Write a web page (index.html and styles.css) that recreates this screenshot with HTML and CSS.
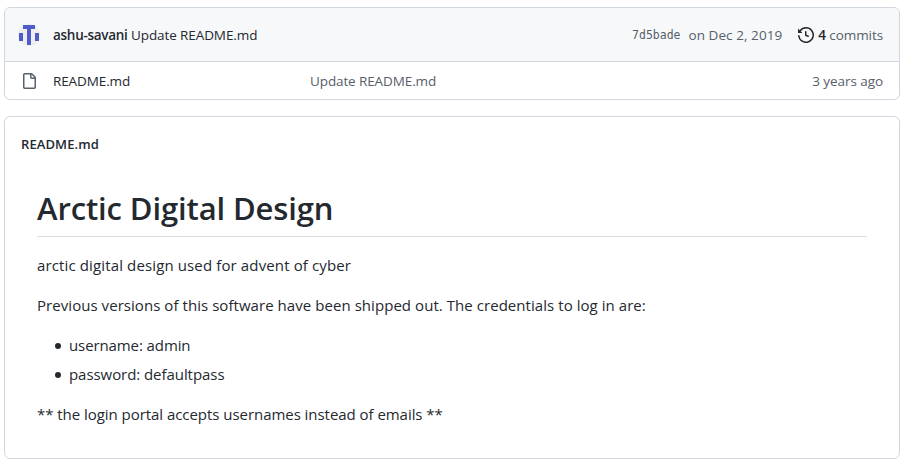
FILE: index.html
```
<!DOCTYPE html>
<html lang="en">
<head>
<meta charset="utf-8">
<title>README.md</title>
<link rel="stylesheet" href="styles.css">
</head>
<body>
<section class="box files">
  <header class="commit-bar">
    <svg class="avatar" width="22" height="22" viewBox="0 0 22 22" aria-hidden="true" shape-rendering="crispEdges">
      <circle cx="11" cy="11" r="11" fill="#eeeeee" shape-rendering="auto"/>
      <path fill="#505cc9" d="M5 1h12v4h-4v16H9V5H5zM1 9h4v8H1zM17 9h4v8h-4z"/>
    </svg>
    <p class="commit"><b class="author">ashu-savani</b> <span class="subject">Update README.md</span></p>
    <code class="sha">7d5bade</code>
    <span class="date">on Dec 2, 2019</span>
    <svg class="history" width="16" height="16" viewBox="0 0 16 16" fill="#24292f" aria-hidden="true"><path fill-rule="evenodd" d="M1.643 3.143L.427 1.927A.25.25 0 000 2.104V5.75c0 .138.112.25.25.25h3.646a.25.25 0 00.177-.427L2.715 4.215a6.5 6.5 0 11-1.18 4.458.75.75 0 10-1.493.154 8.001 8.001 0 101.6-5.684zM7.75 4a.75.75 0 01.75.75v2.992l2.028.812a.75.75 0 01-.557 1.392l-2.5-1A.75.75 0 017 8.25v-3.5A.75.75 0 017.75 4z"/></svg>
    <span class="commits"><b class="count">4</b> <span class="label">commits</span></span>
  </header>
  <div class="file-row">
    <svg class="file-icon" width="16" height="16" viewBox="0 0 16 16" fill="#57606a" aria-hidden="true"><path fill-rule="evenodd" d="M3.75 1.5a.25.25 0 00-.25.25v12.5c0 .138.112.25.25.25h9.5a.25.25 0 00.25-.25V6h-2.75A1.75 1.75 0 019 4.250V1.5H3.75zm6.75.062V4.25c0 .138.112.25.25.25h2.688a.252.252 0 00-.011-.013l-2.914-2.914a.272.272 0 00-.013-.011zM2 1.75C2 .784 2.784 0 3.750 0h6.586c.464 0 .909.184 1.237.513l2.914 2.914c.329.328.513.773.513 1.237v9.586A1.75 1.75 0 0113.250 16h-9.500A1.75 1.75 0 012 14.250V1.75z"/></svg>
    <span class="file-name">README.md</span>
    <span class="message">Update README.md</span>
    <span class="age">3 years ago</span>
  </div>
</section>
<section class="box readme">
  <h2 class="readme-name">README.md</h2>
  <article class="markdown">
    <h1><span class="title">Arctic Digital Design</span></h1>
    <p><span class="intro">arctic digital design used for advent of cyber</span></p>
    <p><span class="credentials">Previous versions of this software have been shipped out. The credentials to log in are:</span></p>
    <ul>
      <li><span class="user">username: admin</span></li>
      <li><span class="pass">password: defaultpass</span></li>
    </ul>
    <p><span class="note">** the login portal accepts usernames instead of emails **</span></p>
  </article>
</section>
</body>
</html>
```
FILE: styles.css
```
* { box-sizing: border-box; }
body {
  margin: 0;
  padding: 7px 9px 0 4px;
  background: #fff;
  color: #24292f;
  font: 13.5px/20px "Open Sans", "Noto Sans", sans-serif;
}
b { font-weight: 600; }
p, h1, h2, ul { margin: 0; }
.box {
  border: 1px solid #d0d7de;
  border-radius: 6px;
  overflow: hidden;
}
.files { height: 93px; margin-bottom: 16px; }
.commit-bar {
  display: flex;
  align-items: center;
  height: 54px;
  padding: 0 16px 0 13px;
  background: #f6f8fa;
  border-bottom: 1px solid #d0d7de;
  white-space: nowrap;
}
.avatar { margin-right: 13px; }
.commit { flex: 1; letter-spacing: -0.1px; }
.author { letter-spacing: -0.28px; }
.sha { font: 11.5px/20px "DejaVu Sans Mono", monospace; color: #57606a; margin: 1px 8px 0 0; }
.date, .label, .message, .age { color: #57606a; }
.date { letter-spacing: 0.06px; }
.history { margin: 1px 4px 0 16px; }
.commits { letter-spacing: -0.08px; }
.file-row {
  display: flex;
  align-items: center;
  height: 38px;
  padding: 0 16px;
}
.file-icon { margin-right: 16px; }
.file-name { width: 257px; letter-spacing: -0.11px; }
.message { flex: 1; letter-spacing: -0.11px; }
.age { letter-spacing: -0.06px; }
.readme { height: 343px; padding: 17px 32px 0; }
.readme-name { margin-left: -16px; font-size: 13px; line-height: 20px; font-weight: 600; letter-spacing: 0.1px; }
.markdown { padding-top: 32px; font-size: 15px; line-height: 24px; }
.markdown h1 {
  height: 51px;
  margin-bottom: 16px;
  border-bottom: 1px solid #d8dee4;
  font-size: 31px;
  line-height: 44px;
  font-weight: 600;
  letter-spacing: -0.12px;
}
.intro { letter-spacing: 0.13px; }
.credentials { letter-spacing: 0.055px; }
.user { letter-spacing: -0.1px; }
.pass { letter-spacing: -0.06px; }
.note { letter-spacing: -0.045px; }
.markdown p, .markdown ul { margin-bottom: 16px; white-space: nowrap; }
.markdown ul { padding-left: 32px; list-style: none; }
.markdown li { display: flex; align-items: center; }
.markdown li::before {
  content: "";
  width: 6px;
  height: 6px;
  margin: 2px 8px 0 -14px;
  border-radius: 50%;
  background: #24292f;
}
.markdown li + li { margin-top: 5px; }
```
